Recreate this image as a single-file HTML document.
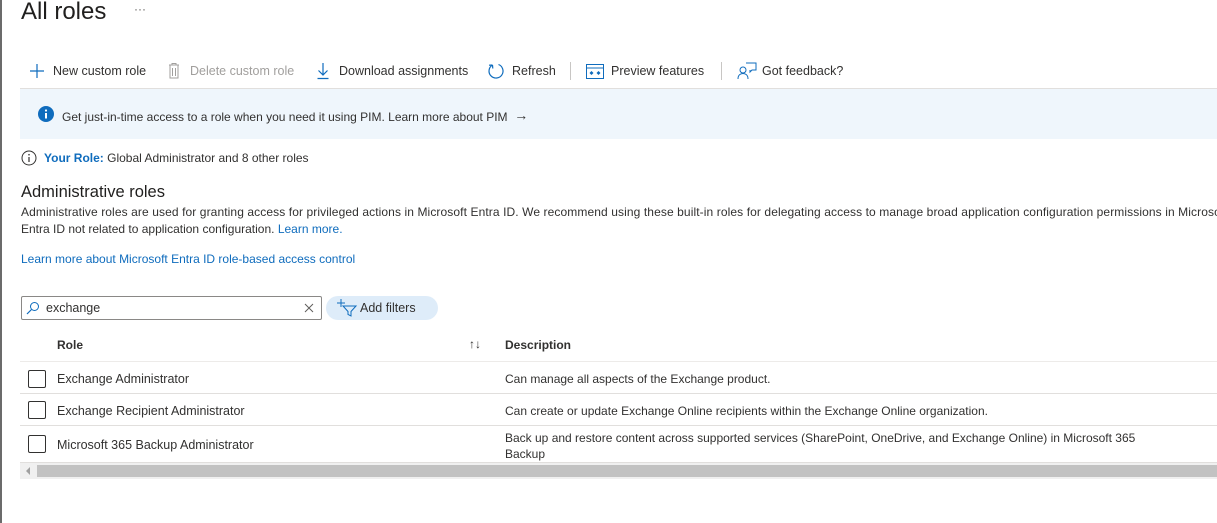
<!DOCTYPE html>
<html><head><meta charset="utf-8"><style>
*{margin:0;padding:0;box-sizing:border-box}
body{width:1217px;height:523px;overflow:hidden;background:#fff;font-family:"Liberation Sans",sans-serif;color:#323130;font-size:12.5px;position:relative}
.a{position:absolute;white-space:nowrap}
.blue{color:#0f6cbd}
.tb{top:64px;font-size:12.5px}
.dis{color:#a19f9d}
svg{position:absolute}
</style></head><body>
<div class="a" style="left:0;top:0;width:2px;height:523px;background:#6b6b6b"></div>
<div class="a" style="left:21px;top:-2px;font-size:24px;color:#201f1e">All roles</div>
<div class="a" style="left:134px;top:2px;font-size:12px;color:#605e5c">···</div>

<svg style="left:29px;top:63px" width="16" height="16"><path d="M8 1v14M1 8h14" stroke="#0f6cbd" stroke-width="1.2"/></svg>
<div class="a tb" style="left:53px">New custom role</div>
<svg style="left:166px;top:62px" width="16" height="18"><path d="M3 3h10M6 3V1.5h4V3M4 3v13h8V3M6.5 6v8M9.5 6v8" stroke="#a19f9d" fill="none"/></svg>
<div class="a tb dis" style="left:190px">Delete custom role</div>
<svg style="left:316px;top:62px" width="14" height="18"><path d="M7 1v12M2.5 8.5 7 13l4.5-4.5M1.5 16.5h11" stroke="#0f6cbd" fill="none" stroke-width="1.2"/></svg>
<div class="a tb" style="left:339px">Download assignments</div>
<svg style="left:487px;top:62px" width="18" height="18"><path d="M5.5 3A7 7 0 1 0 11.5 2.5M5.5 3 5.8 6.5M5.5 3 2 3.2" stroke="#0f6cbd" fill="none" stroke-width="1.2"/></svg>
<div class="a tb" style="left:512px">Refresh</div>
<div class="a" style="left:570px;top:62px;width:1px;height:18px;background:#c8c6c4"></div>
<svg style="left:586px;top:64px" width="18" height="15"><rect x="0.5" y="0.5" width="17" height="14" fill="none" stroke="#0f6cbd"/><path d="M0.5 4h17" stroke="#0f6cbd"/><path d="M3.5 9l2-2 2 2-2 2zM10.5 9l2-2 2 2-2 2z" fill="#0f6cbd"/></svg>
<div class="a tb" style="left:611px">Preview features</div>
<div class="a" style="left:721px;top:62px;width:1px;height:18px;background:#c8c6c4"></div>
<svg style="left:737px;top:62px" width="20" height="18"><circle cx="6" cy="8" r="3" fill="none" stroke="#0f6cbd"/><path d="M1 17c0-4 2.5-5.5 5-5.5s5 1.5 5 5.5M9 1h10v7h-4l-2 2V8" fill="none" stroke="#0f6cbd"/></svg>
<div class="a tb" style="left:762px">Got feedback?</div>
<div class="a" style="left:20px;top:88px;width:1197px;height:1px;background:#e1dfdd"></div>

<div class="a" style="left:20px;top:89px;width:1197px;height:50px;background:#eff6fc"></div>
<svg style="left:38px;top:106px" width="16" height="16"><circle cx="8" cy="8" r="8" fill="#0f6cbd"/><rect x="7" y="7" width="2" height="5.5" fill="#fff"/><circle cx="8" cy="4.5" r="1.1" fill="#fff"/></svg>
<div class="a" style="left:62px;top:108px;font-size:12px">Get just-in-time access to a role when you need it using PIM. Learn more about PIM &nbsp;<span style="font-size:14px;position:relative;top:-1px">→</span></div>

<svg style="left:21px;top:150px" width="16" height="16"><circle cx="8" cy="8" r="7" fill="none" stroke="#323130"/><path d="M8 7v5" stroke="#323130" stroke-width="1.2"/><circle cx="8" cy="4.7" r=".8" fill="#323130"/></svg>
<div class="a" style="left:44px;top:151px;font-size:12px"><b class="blue">Your Role:</b> Global Administrator and 8 other roles</div>

<div class="a" style="left:21px;top:183px;font-size:16.5px;color:#201f1e">Administrative roles</div>
<div class="a" style="left:21px;top:205px;font-size:12px;letter-spacing:.1px">Administrative roles are used for granting access for privileged actions in Microsoft Entra ID. We recommend using these built-in roles for delegating access to manage broad application configuration permissions in Microsoft</div>
<div class="a" style="left:21px;top:222px;font-size:12px">Entra ID not related to application configuration. <span class="blue">Learn more.</span></div>
<div class="a blue" style="left:21px;top:252px;font-size:12px">Learn more about Microsoft Entra ID role-based access control</div>

<div class="a" style="left:21px;top:296px;width:301px;height:24px;border:1px solid #8a8886;border-radius:2px"></div>
<svg style="left:26px;top:301px" width="14" height="14"><circle cx="8.5" cy="5.5" r="4" fill="none" stroke="#0f6cbd"/><path d="M5.5 8.5 1 13" stroke="#0f6cbd" stroke-width="1.2"/></svg>
<div class="a" style="left:46px;top:301px;font-size:12.5px">exchange</div>
<svg style="left:304px;top:303px" width="10" height="10"><path d="M1 1l8 8M9 1 1 9" stroke="#605e5c"/></svg>
<div class="a" style="left:326px;top:296px;width:112px;height:24px;background:#deecf9;border-radius:12px"></div>
<svg style="left:336px;top:298px" width="22" height="20"><path d="M5 1v8M1 5h8" stroke="#0f6cbd"/><path d="M7 8h13l-5 5.5V18l-3-1.5v-3z" fill="none" stroke="#0f6cbd"/></svg>
<div class="a" style="left:360px;top:301px;font-size:12.5px">Add filters</div>

<div class="a" style="left:57px;top:338px;font-weight:bold;font-size:12px">Role</div>
<div class="a" style="left:469px;top:337px;font-size:12px">↑↓</div>
<div class="a" style="left:505px;top:338px;font-weight:bold;font-size:12px">Description</div>
<div class="a" style="left:20px;top:361px;width:1197px;height:1px;background:#edebe9"></div>

<div class="a" style="left:28px;top:370px;width:18px;height:18px;border:1px solid #323130;border-radius:2px"></div>
<div class="a" style="left:57px;top:372px;font-size:12.5px">Exchange Administrator</div>
<div class="a" style="left:505px;top:372px;font-size:12px">Can manage all aspects of the Exchange product.</div>
<div class="a" style="left:20px;top:393px;width:1197px;height:1px;background:#e1dfdd"></div>

<div class="a" style="left:28px;top:401px;width:18px;height:18px;border:1px solid #323130;border-radius:2px"></div>
<div class="a" style="left:57px;top:404px;font-size:12.5px">Exchange Recipient Administrator</div>
<div class="a" style="left:505px;top:404px;font-size:12px">Can create or update Exchange Online recipients within the Exchange Online organization.</div>
<div class="a" style="left:20px;top:425px;width:1197px;height:1px;background:#e1dfdd"></div>

<div class="a" style="left:28px;top:435px;width:18px;height:18px;border:1px solid #323130;border-radius:2px"></div>
<div class="a" style="left:57px;top:438px;font-size:12.5px">Microsoft 365 Backup Administrator</div>
<div class="a" style="left:505px;top:430px;font-size:12px;line-height:16px">Back up and restore content across supported services (SharePoint, OneDrive, and Exchange Online) in Microsoft 365<br>Backup</div>
<div class="a" style="left:20px;top:462px;width:1197px;height:1px;background:#e1dfdd"></div>

<div class="a" style="left:20px;top:463px;width:1197px;height:16px;background:#f0f0f0"></div>
<div class="a" style="left:37px;top:465px;width:1180px;height:12px;background:#c2c2c2"></div>
<svg style="left:25px;top:467px" width="6" height="8"><path d="M5 0v8L1 4z" fill="#a0a0a0"/></svg>
</body></html>
